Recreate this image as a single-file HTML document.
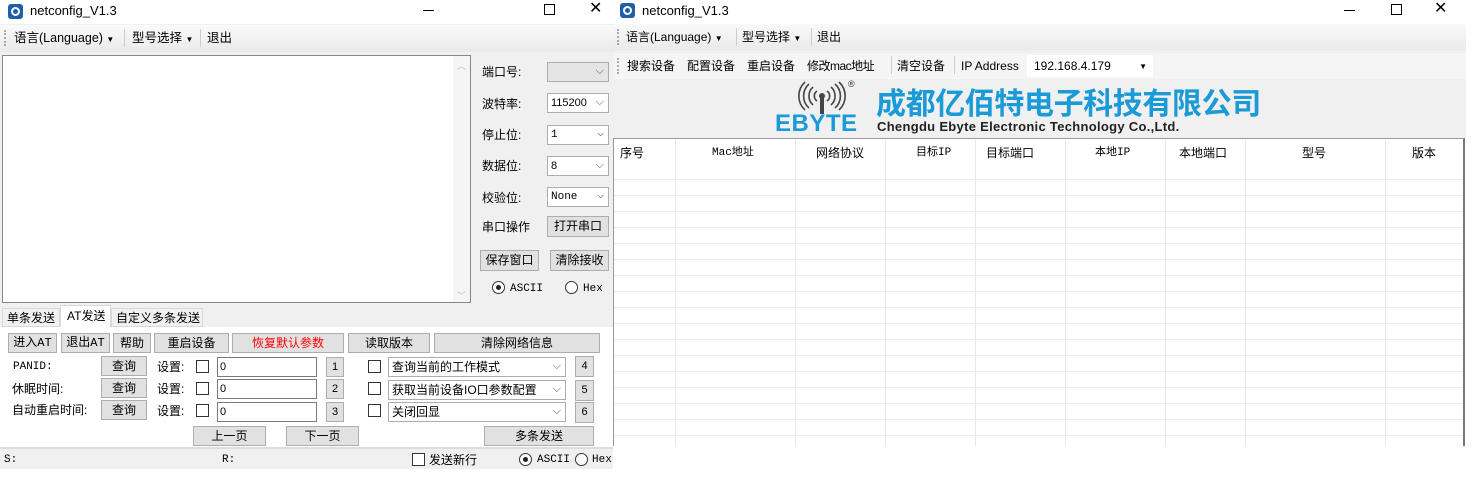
<!DOCTYPE html>
<html><head><meta charset="utf-8"><style>
*{box-sizing:border-box;margin:0;padding:0}
body{width:1472px;height:478px;background:#fff;position:relative;overflow:hidden;font-family:"Liberation Sans","Noto Sans CJK SC",sans-serif;font-size:12px;color:#000}
.a{position:absolute;white-space:nowrap;line-height:16px}
.btn{position:absolute;background:#e1e1e1;border:1px solid #adadad;text-align:center;font-size:12px;line-height:18px}
.inp{position:absolute;background:#fff;border:1px solid #7a7a7a;font-size:11px;padding-left:2px;line-height:18px}
.cmb{position:absolute;background:#fff;border:1px solid #abadb3;font-size:11px;padding-left:3px;line-height:18px}
.cmb:after{content:"⌵";position:absolute;right:4px;top:-1px;color:#555;font-size:11px}
.cb{position:absolute;width:13px;height:13px;border:1px solid #333;background:#fff}
.rb{position:absolute;width:13px;height:13px;border:1px solid #333;border-radius:50%;background:#fff}
.rb.on:after{content:"";position:absolute;left:3px;top:3px;width:5px;height:5px;border-radius:50%;background:#222}
.serif{font-family:"Liberation Mono","Noto Sans CJK SC",monospace;font-size:11px}
.vl{position:absolute;width:1px;background:#e8e8e8}
.hl{position:absolute;height:1px;background:#ececec}
</style></head><body>
<!-- LEFT WINDOW -->
<div class="a" style="left:0;top:0;width:614px;height:469px;background:#f0f0f0"></div>
<div class="a" style="left:0;top:0;width:614px;height:24px;background:#fff"></div>
<div class="a" style="left:8px;top:4px;width:15px;height:15px;background:#1f5fa8;border-radius:3px"></div>
<div class="a" style="left:11px;top:7px;width:9px;height:9px;border:2px solid #fff;border-radius:50%"></div>
<div class="a" style="left:30px;top:3px;font-size:13px">netconfig_V1.3</div>
<div class="a" style="left:423px;top:10px;width:11px;height:1px;background:#000"></div>
<div class="a" style="left:544px;top:4px;width:11px;height:11px;border:1px solid #000"></div>
<div class="a" style="left:589px;top:1px;font-size:16px">✕</div>
<div class="a" style="left:0;top:25px;width:614px;height:27px;background:linear-gradient(#fafafa,#eaeaea)"></div>
<div class="a" style="left:4px;top:30px;width:2px;height:16px;border-left:2px dotted #aaa"></div>
<div class="a" style="left:14px;top:30px;font-size:12.5px">语言(Language) <span style="font-size:8px">▼</span></div>
<div class="a" style="left:124px;top:29px;width:1px;height:18px;background:#ccc"></div>
<div class="a" style="left:132px;top:30px;font-size:12.5px">型号选择 <span style="font-size:8px">▼</span></div>
<div class="a" style="left:200px;top:29px;width:1px;height:18px;background:#ccc"></div>
<div class="a" style="left:207px;top:30px;font-size:12.5px">退出</div>
<div class="a" style="left:2px;top:55px;width:469px;height:248px;background:#fff;border:1px solid #828790"></div>
<div class="a" style="left:453px;top:56px;width:17px;height:246px;background:#f5f5f5"></div>
<div class="a" style="left:457px;top:58px;color:#bbb;font-size:9px">︿</div>
<div class="a" style="left:457px;top:288px;color:#bbb;font-size:9px">﹀</div>
<div class="a" style="left:482px;top:64px">端口号:</div>
<div class="cmb" style="left:547px;top:62px;width:62px;height:20px;background:#e5e5e5"></div>
<div class="a" style="left:482px;top:96px">波特率:</div>
<div class="cmb" style="left:547px;top:93px;width:62px;height:20px">115200</div>
<div class="a" style="left:482px;top:127px">停止位:</div>
<div class="cmb serif" style="left:547px;top:125px;width:62px;height:20px">1</div>
<div class="a" style="left:482px;top:158px">数据位:</div>
<div class="cmb" style="left:547px;top:156px;width:62px;height:20px">8</div>
<div class="a" style="left:482px;top:190px">校验位:</div>
<div class="cmb serif" style="left:547px;top:187px;width:62px;height:20px">None</div>
<div class="a" style="left:482px;top:219px">串口操作</div>
<div class="btn" style="left:547px;top:216px;width:62px;height:21px">打开串口</div>
<div class="btn" style="left:480px;top:250px;width:59px;height:21px">保存窗口</div>
<div class="btn" style="left:550px;top:250px;width:59px;height:21px">清除接收</div>
<div class="rb on" style="left:492px;top:281px"></div><div class="a serif" style="left:510px;top:281px">ASCII</div>
<div class="rb" style="left:565px;top:281px"></div><div class="a serif" style="left:583px;top:281px">Hex</div>
<div class="a" style="left:2px;top:308px;width:58px;height:19px;border:1px solid #d9d9d9;background:#f0f0f0;padding:1px 4px">单条发送</div>
<div class="a" style="left:60px;top:305px;width:51px;height:22px;border:1px solid #d9d9d9;border-bottom:none;background:#fff;padding:2px 6px">AT发送</div>
<div class="a" style="left:111px;top:308px;width:92px;height:19px;border:1px solid #d9d9d9;background:#f0f0f0;padding:1px 4px">自定义多条发送</div>
<div class="a" style="left:0;top:327px;width:614px;height:120px;background:#fff"></div>
<div class="btn serif" style="left:8px;top:333px;width:49px;height:20px;font-size:12px">进入AT</div>
<div class="btn serif" style="left:61px;top:333px;width:49px;height:20px;font-size:12px">退出AT</div>
<div class="btn" style="left:113px;top:333px;width:38px;height:20px">帮助</div>
<div class="btn" style="left:154px;top:333px;width:75px;height:20px">重启设备</div>
<div class="btn" style="left:232px;top:333px;width:112px;height:20px;color:#f00">恢复默认参数</div>
<div class="btn" style="left:348px;top:333px;width:82px;height:20px">读取版本</div>
<div class="btn" style="left:434px;top:333px;width:166px;height:20px">清除网络信息</div>
<div class="a serif" style="left:13px;top:359px">PANID:</div>
<div class="a" style="left:12px;top:381px">休眠时间:</div>
<div class="a" style="left:12px;top:402px">自动重启时间:</div>
<div class="btn" style="left:101px;top:356px;width:46px;height:20px">查询</div>
<div class="btn" style="left:101px;top:378px;width:46px;height:20px">查询</div>
<div class="btn" style="left:101px;top:400px;width:46px;height:20px">查询</div>
<div class="a" style="left:157px;top:359px">设置:</div><div class="cb" style="left:196px;top:360px"></div>
<div class="a" style="left:157px;top:381px">设置:</div><div class="cb" style="left:196px;top:382px"></div>
<div class="a" style="left:157px;top:403px">设置:</div><div class="cb" style="left:196px;top:404px"></div>
<div class="inp" style="left:217px;top:357px;width:100px;height:20px">0</div>
<div class="inp" style="left:217px;top:379px;width:100px;height:20px">0</div>
<div class="inp" style="left:217px;top:402px;width:100px;height:20px">0</div>
<div class="btn" style="left:326px;top:357px;width:18px;height:20px;font-size:11px">1</div>
<div class="btn" style="left:326px;top:379px;width:18px;height:20px;font-size:11px">2</div>
<div class="btn" style="left:326px;top:402px;width:18px;height:20px;font-size:11px">3</div>
<div class="cb" style="left:368px;top:360px"></div>
<div class="cb" style="left:368px;top:382px"></div>
<div class="cb" style="left:368px;top:404px"></div>
<div class="cmb" style="left:388px;top:357px;width:178px;height:20px;font-size:12px">查询当前的工作模式</div>
<div class="cmb" style="left:388px;top:380px;width:178px;height:20px;font-size:12px">获取当前设备IO口参数配置</div>
<div class="cmb" style="left:388px;top:402px;width:178px;height:20px;font-size:12px">关闭回显</div>
<div class="btn" style="left:575px;top:356px;width:19px;height:21px;font-size:11px">4</div>
<div class="btn" style="left:575px;top:380px;width:19px;height:21px;font-size:11px">5</div>
<div class="btn" style="left:575px;top:402px;width:19px;height:21px;font-size:11px">6</div>
<div class="btn" style="left:193px;top:426px;width:73px;height:20px">上一页</div>
<div class="btn" style="left:286px;top:426px;width:73px;height:20px">下一页</div>
<div class="btn" style="left:484px;top:426px;width:110px;height:20px">多条发送</div>
<div class="a" style="left:0;top:447px;width:614px;height:2px;background:#ddd"></div>
<div class="a serif" style="left:4px;top:452px">S:</div>
<div class="a serif" style="left:222px;top:452px">R:</div>
<div class="cb" style="left:412px;top:453px"></div><div class="a" style="left:429px;top:452px">发送新行</div>
<div class="rb on" style="left:519px;top:453px"></div><div class="a serif" style="left:537px;top:452px">ASCII</div>
<div class="rb" style="left:575px;top:453px"></div><div class="a serif" style="left:592px;top:452px">Hex</div>

<!-- RIGHT WINDOW -->
<div class="a" style="left:614px;top:0;width:852px;height:138px;background:#f0f0f0"></div>
<div class="a" style="left:614px;top:0;width:858px;height:24px;background:#fff"></div>
<div class="a" style="left:620px;top:3px;width:15px;height:15px;background:#1f5fa8;border-radius:3px"></div>
<div class="a" style="left:623px;top:6px;width:9px;height:9px;border:2px solid #fff;border-radius:50%"></div>
<div class="a" style="left:642px;top:3px;font-size:13px">netconfig_V1.3</div>
<div class="a" style="left:1344px;top:10px;width:11px;height:1px;background:#000"></div>
<div class="a" style="left:1391px;top:4px;width:11px;height:11px;border:1px solid #000"></div>
<div class="a" style="left:1434px;top:1px;font-size:16px">✕</div>
<div class="a" style="left:614px;top:24px;width:852px;height:26px;background:linear-gradient(#fafafa,#eaeaea)"></div>
<div class="a" style="left:617px;top:29px;height:16px;border-left:2px dotted #aaa"></div>
<div class="a" style="left:626px;top:29px;font-size:12px">语言(Language) <span style="font-size:8px">▼</span></div>
<div class="a" style="left:736px;top:28px;width:1px;height:18px;background:#ccc"></div>
<div class="a" style="left:742px;top:29px;font-size:12px">型号选择 <span style="font-size:8px">▼</span></div>
<div class="a" style="left:811px;top:28px;width:1px;height:18px;background:#ccc"></div>
<div class="a" style="left:817px;top:29px;font-size:12px">退出</div>
<div class="a" style="left:614px;top:53px;width:852px;height:26px;background:#f5f5f5"></div>
<div class="a" style="left:617px;top:58px;height:16px;border-left:2px dotted #aaa"></div>
<div class="a" style="left:627px;top:58px;font-size:12px">搜索设备</div>
<div class="a" style="left:687px;top:58px;font-size:12px">配置设备</div>
<div class="a" style="left:747px;top:58px;font-size:12px">重启设备</div>
<div class="a" style="left:807px;top:58px;font-size:12px;letter-spacing:-0.5px">修改mac地址</div>
<div class="a" style="left:891px;top:56px;width:1px;height:18px;background:#ccc"></div>
<div class="a" style="left:897px;top:58px;font-size:12px">清空设备</div>
<div class="a" style="left:954px;top:56px;width:1px;height:18px;background:#ccc"></div>
<div class="a" style="left:961px;top:58px;font-size:12px">IP Address</div>
<div class="a" style="left:1027px;top:55px;width:126px;height:22px;background:#fff;padding:3px 7px;font-size:12px">192.168.4.179<span style="position:absolute;right:6px;top:4px;font-size:8px">▼</span></div>
<!-- logo -->
<svg class="a" style="left:796px;top:80px" width="60" height="36" viewBox="0 0 60 36">
<g fill="none" stroke="#444" stroke-width="1.6">
<path d="M17 7 A12 12 0 0 0 17 25"/><path d="M13 4 A16 16 0 0 0 13 28"/><path d="M9 2 A19 19 0 0 0 9 30"/>
<path d="M35 7 A12 12 0 0 1 35 25"/><path d="M39 4 A16 16 0 0 1 39 28"/><path d="M43 2 A19 19 0 0 1 43 30"/>
<path d="M21 11 A6 6 0 0 0 21 21"/><path d="M31 11 A6 6 0 0 1 31 21"/>
</g><circle cx="26" cy="16" r="3" fill="#444"/><rect x="24" y="18" width="4" height="16" fill="#444"/>
</svg>
<div class="a" style="left:848px;top:76px;font-size:9px;color:#333">®</div>
<div class="a" style="left:775px;top:112px;font-size:24px;line-height:24px;font-weight:bold;color:#1a9ad6;letter-spacing:0.5px">EBYTE</div>
<div class="a" style="left:876px;top:83px;font-size:30px;font-weight:bold;color:#1a9ad6;letter-spacing:-0.4px;line-height:36px;font-family:'Noto Sans CJK SC',sans-serif">成都亿佰特电子科技有限公司</div>
<div class="a" style="left:877px;top:119px;font-size:13px;font-weight:bold;color:#222;letter-spacing:0.3px">Chengdu Ebyte Electronic Technology Co.,Ltd.</div>
<!-- table -->
<div class="a" style="left:613px;top:138px;width:852px;height:309px;background:#fff;border-top:1px solid #999;border-left:1px solid #999;border-right:2px solid #777"></div>
<div class="a" style="left:620px;top:145px">序号</div>
<div class="a serif" style="left:712px;top:145px">Mac地址</div>
<div class="a" style="left:816px;top:145px">网络协议</div>
<div class="a serif" style="left:916px;top:145px">目标IP</div>
<div class="a" style="left:986px;top:145px">目标端口</div>
<div class="a serif" style="left:1095px;top:145px">本地IP</div>
<div class="a" style="left:1179px;top:145px">本地端口</div>
<div class="a" style="left:1302px;top:145px">型号</div>
<div class="a" style="left:1412px;top:145px">版本</div>
<div class="vl" style="left:675px;top:140px;height:307px"></div>
<div class="vl" style="left:795px;top:140px;height:307px"></div>
<div class="vl" style="left:885px;top:140px;height:307px"></div>
<div class="vl" style="left:975px;top:140px;height:307px"></div>
<div class="vl" style="left:1065px;top:140px;height:307px"></div>
<div class="vl" style="left:1165px;top:140px;height:307px"></div>
<div class="vl" style="left:1245px;top:140px;height:307px"></div>
<div class="vl" style="left:1385px;top:140px;height:307px"></div>
<div class="hl" style="left:614px;top:179px;width:849px"></div>
<div class="hl" style="left:614px;top:195px;width:849px"></div>
<div class="hl" style="left:614px;top:211px;width:849px"></div>
<div class="hl" style="left:614px;top:227px;width:849px"></div>
<div class="hl" style="left:614px;top:243px;width:849px"></div>
<div class="hl" style="left:614px;top:259px;width:849px"></div>
<div class="hl" style="left:614px;top:275px;width:849px"></div>
<div class="hl" style="left:614px;top:291px;width:849px"></div>
<div class="hl" style="left:614px;top:307px;width:849px"></div>
<div class="hl" style="left:614px;top:323px;width:849px"></div>
<div class="hl" style="left:614px;top:339px;width:849px"></div>
<div class="hl" style="left:614px;top:355px;width:849px"></div>
<div class="hl" style="left:614px;top:371px;width:849px"></div>
<div class="hl" style="left:614px;top:387px;width:849px"></div>
<div class="hl" style="left:614px;top:403px;width:849px"></div>
<div class="hl" style="left:614px;top:419px;width:849px"></div>
<div class="hl" style="left:614px;top:435px;width:849px"></div>
<div class="a" style="left:613px;top:446px;width:859px;height:32px;background:#fff"></div>
</body></html>
